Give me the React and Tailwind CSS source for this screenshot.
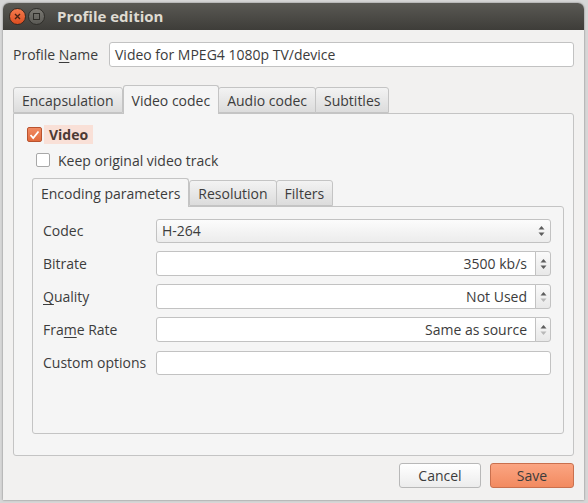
import React from 'react';

const font = { fontFamily: '"Open Sans", "Noto Sans", sans-serif' };

const Tab = ({ label, active, first }) => (
  <div
    className={
      active
        ? 'relative z-10 -mb-px h-[29px] px-[8px] flex items-center bg-[#f5f5f5] border border-b-0 border-[#c4c4c4] rounded-t-[3px]'
        : 'h-[26px] px-[8px] flex items-center bg-gradient-to-b from-[#f3f3f3] to-[#dcdcdc] border border-[#c4c4c4] rounded-t-[3px]' + (first ? '' : ' -ml-px')
    }
  >
    {label}
  </div>
);

const Arrows = ({ downDisabled }) => (
  <svg width="7" height="12" viewBox="0 0 7 12">
    <path d="M0.5 4.5 L3.5 1 L6.5 4.5 Z" fill="#5d5d5d" />
    <path d="M0.5 7.5 L3.5 11 L6.5 7.5 Z" fill={downDisabled ? '#b8b8b8' : '#5d5d5d'} />
  </svg>
);

const Spin = ({ value, downDisabled }) => (
  <div className="flex w-[395px] h-[25px]">
    <div className="flex-1 bg-white border border-[#c2c2c2] rounded-l-[3px] flex items-center justify-end pr-[8px]">
      {value}
    </div>
    <div className="w-[16px] -ml-px bg-gradient-to-b from-[#fafafa] to-[#e8e8e8] border border-[#c2c2c2] rounded-r-[3px] flex items-center justify-center">
      <Arrows downDisabled={downDisabled} />
    </div>
  </div>
);

const Row = ({ label, children }) => (
  <div className="flex items-center h-[25px]">
    <div className="w-[113px]">{label}</div>
    {children}
  </div>
);

const U = ({ children }) => <span className="underline underline-offset-2">{children}</span>;

export default function App() {
  return (
    <div className="w-[588px] h-[503px] bg-[#d6d6d6] overflow-hidden text-[14px] text-[#3c3c3c]" style={font}>
      <div className="ml-[3px] mt-[3px] w-[581px] h-[497px] flex flex-col bg-[#f2f1f0] rounded-t-[6px] overflow-hidden shadow-[0_0_2px_rgba(0,0,0,0.5)]">
        {/* Title bar */}
        <div className="h-[27px] shrink-0 flex items-center bg-gradient-to-b from-[#5a5954] to-[#3e3d39] px-[6px]">
          <div className="w-[17px] h-[17px] rounded-full bg-gradient-to-b from-[#f47a4c] to-[#dc4d1f] border border-[#3a2a22] flex items-center justify-center">
            <svg width="7" height="7" viewBox="0 0 7 7">
              <path d="M1 1 L6 6 M6 1 L1 6" stroke="#4a2414" strokeWidth="1.4" />
            </svg>
          </div>
          <div className="ml-[2px] w-[17px] h-[17px] rounded-full bg-gradient-to-b from-[#7a7973] to-[#5b5a55] border border-[#2f2e2a] flex items-center justify-center">
            <div className="w-[7px] h-[7px] border border-[#2d2c28]" />
          </div>
          <div className="ml-[12px] font-bold text-[15px] text-[#dfdbd2]">Profile edition</div>
        </div>

        {/* Body */}
        <div className="flex-1 flex flex-col pl-[10px] pr-[10px] pt-[12px]">
          <div className="flex items-center h-[25px]">
            <div className="w-[96px]">Profile <U>N</U>ame</div>
            <div className="flex-1 h-[25px] bg-white border border-[#c2c2c2] rounded-[3px] flex items-center pl-[5px]">
              Video for MPEG4 1080p TV/device
            </div>
          </div>

          {/* Outer tabs */}
          <div className="mt-[17px] flex flex-col">
            <div className="flex items-end h-[29px]">
              <Tab label="Encapsulation" first />
              <Tab label="Video codec" active />
              <Tab label="Audio codec" />
              <Tab label="Subtitles" />
            </div>
            <div className="h-[343px] bg-[#f5f5f5] border border-[#c4c4c4] rounded-b-[3px] rounded-tr-[3px] pl-[13px] pr-[9px] pt-[11px] flex flex-col">
              <div className="flex items-center h-[19px]">
                <div className="w-[15px] h-[15px] rounded-[2px] bg-gradient-to-b from-[#f08a62] to-[#e26a3d] border border-[#b9532f] flex items-center justify-center">
                  <svg width="11" height="10" viewBox="0 0 11 10">
                    <path d="M1.5 5 L4.2 8 L9.5 1.5" stroke="white" strokeWidth="1.8" fill="none" />
                  </svg>
                </div>
                <div className="ml-[2px] h-[19px] px-[5px] flex items-center bg-[#f9e0d7] font-bold text-[#4d3a34]">Video</div>
              </div>
              <div className="flex items-center mt-[7px] ml-[9px] h-[18px]">
                <div className="w-[14px] h-[14px] rounded-[2px] bg-white border border-[#a8a8a8]" />
                <div className="ml-[8px]">Keep original video track</div>
              </div>

              {/* Inner tabs */}
              <div className="mt-[8px] ml-[5px] flex flex-col">
                <div className="flex items-end h-[29px]">
                  <Tab label="Encoding parameters" active />
                  <Tab label="Resolution" first />
                  <Tab label="Filters" />
                </div>
                <div className="h-[228px] bg-[#f5f5f5] border border-[#c4c4c4] rounded-b-[3px] rounded-tr-[3px] pl-[10px] pt-[11px] flex flex-col gap-[8px]">
                  <Row label="Codec">
                    <div className="w-[395px] h-[24px] bg-gradient-to-b from-[#fcfcfc] to-[#ececec] border border-[#c2c2c2] rounded-[3px] flex items-center pl-[5px] pr-[5px] justify-between">
                      <span>H-264</span>
                      <Arrows />
                    </div>
                  </Row>
                  <Row label="Bitrate">
                    <Spin value="3500 kb/s" />
                  </Row>
                  <Row label={<><U>Q</U>uality</>}>
                    <Spin value="Not Used" downDisabled />
                  </Row>
                  <Row label={<>Fra<U>m</U>e Rate</>}>
                    <Spin value="Same as source" downDisabled />
                  </Row>
                  <Row label="Custom options">
                    <div className="w-[395px] h-[24px] bg-white border border-[#c2c2c2] rounded-[3px]" />
                  </Row>
                </div>
              </div>
            </div>
          </div>

          {/* Buttons */}
          <div className="mt-[7px] flex justify-end gap-[9px]">
            <button className="w-[82px] h-[25px] rounded-[3px] border border-[#b8b8b8] bg-gradient-to-b from-[#ffffff] to-[#ececec] text-[#3c3c3c]">
              Cancel
            </button>
            <button className="w-[84px] h-[25px] rounded-[3px] border border-[#c9704e] bg-gradient-to-b from-[#fba582] to-[#f28a60] text-[#3c3c3c]">
              Save
            </button>
          </div>
        </div>
      </div>
    </div>
  );
}
